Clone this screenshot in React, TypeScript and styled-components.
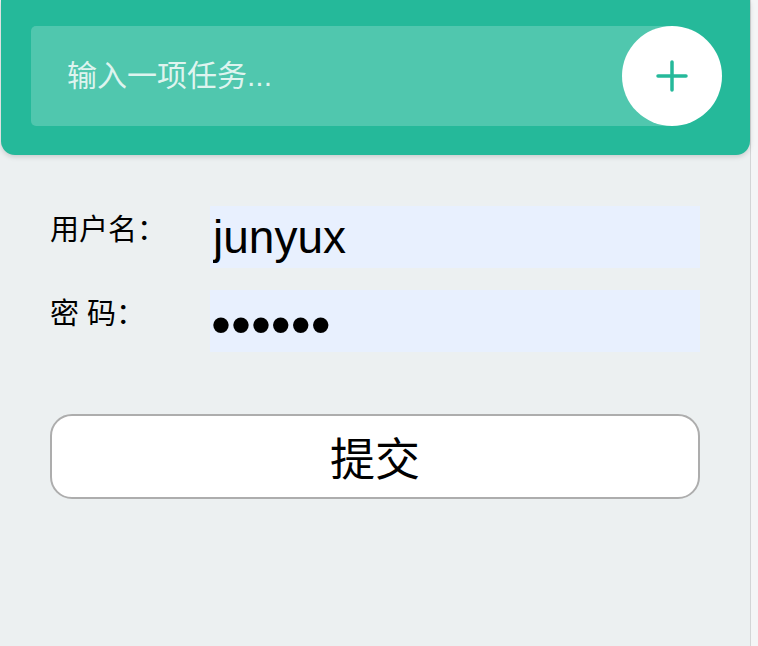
import React from 'react';
import styled, { createGlobalStyle } from 'styled-components';

const Global = createGlobalStyle`
  html, body { margin: 0; padding: 0; background: #f4f5f6; }
  body { font-family: "Liberation Sans", "Noto Sans CJK SC", sans-serif; }
  * { box-sizing: border-box; }
`;

const Page = styled.div`
  width: 751px;
  min-height: 646px;
  background: #ecf0f1;
  border-right: 1px solid #d3d5d6;
`;

const Header = styled.header`
  margin: 0 0 0 1px;
  background: #25b99a;
  padding: 26px 28px 29px 30px;
  border-radius: 0 0 14px 14px;
  box-shadow: 0 2px 5px rgba(0, 0, 0, 0.15);
  display: flex;
  align-items: center;
`;

const TaskInput = styled.input`
  flex: 1;
  height: 100px;
  border: 0;
  outline: none;
  border-radius: 5px;
  background: rgba(255, 255, 255, 0.2);
  padding: 0 0 0 36px;
  margin-right: -50px;
  font-family: inherit;
  font-size: 30px;
  color: #fff;
  &::placeholder { color: rgba(255, 255, 255, 0.82); }
`;

const AddButton = styled.button`
  position: relative;
  width: 100px;
  height: 100px;
  border-radius: 50%;
  border: 0;
  background: #fff;
  display: flex;
  align-items: center;
  justify-content: center;
  padding: 0;
  cursor: pointer;
`;

const Form = styled.form`
  padding: 51px 50px 0 50px;
  display: flex;
  flex-direction: column;
`;

const Row = styled.div`
  display: grid;
  grid-template-columns: 160px 490px;
  margin-bottom: 22px;
`;

const Label = styled.label`
  font-size: 29px;
  line-height: 40px;
  padding-top: 4px;
  color: #000;
`;

const Field = styled.input<{ $masked?: boolean }>`
  height: 62px;
  border: 0;
  outline: none;
  background: #e8f0fe;
  padding: ${(p) => (p.$masked ? '6px 3px 0 1px' : '0 3px')};
  font-family: inherit;
  font-size: ${(p) => (p.$masked ? '57px' : '46px')};
  color: #000;
`;

const Submit = styled.button`
  margin-top: 40px;
  width: 650px;
  height: 85px;
  border: 2px solid #adadad;
  border-radius: 22px;
  background: #fff;
  font-family: inherit;
  font-size: 45px;
  color: #000;
  padding: 0;
`;

export default function App() {
  return (
    <Page>
      <Global />
      <Header>
        <TaskInput placeholder="输入一项任务..." />
        <AddButton type="button" aria-label="add">
          <svg width="32" height="32" viewBox="0 0 32 32">
            <path d="M16 2v28M2 16h28" stroke="#25b99a" strokeWidth="3.5" strokeLinecap="round" />
          </svg>
        </AddButton>
      </Header>
      <Form onSubmit={(e) => e.preventDefault()}>
        <Row>
          <Label>用户名：</Label>
          <Field defaultValue="junyux" />
        </Row>
        <Row>
          <Label>密 码：</Label>
          <Field $masked type="password" defaultValue="123456" />
        </Row>
        <Submit type="submit">提交</Submit>
      </Form>
    </Page>
  );
}
